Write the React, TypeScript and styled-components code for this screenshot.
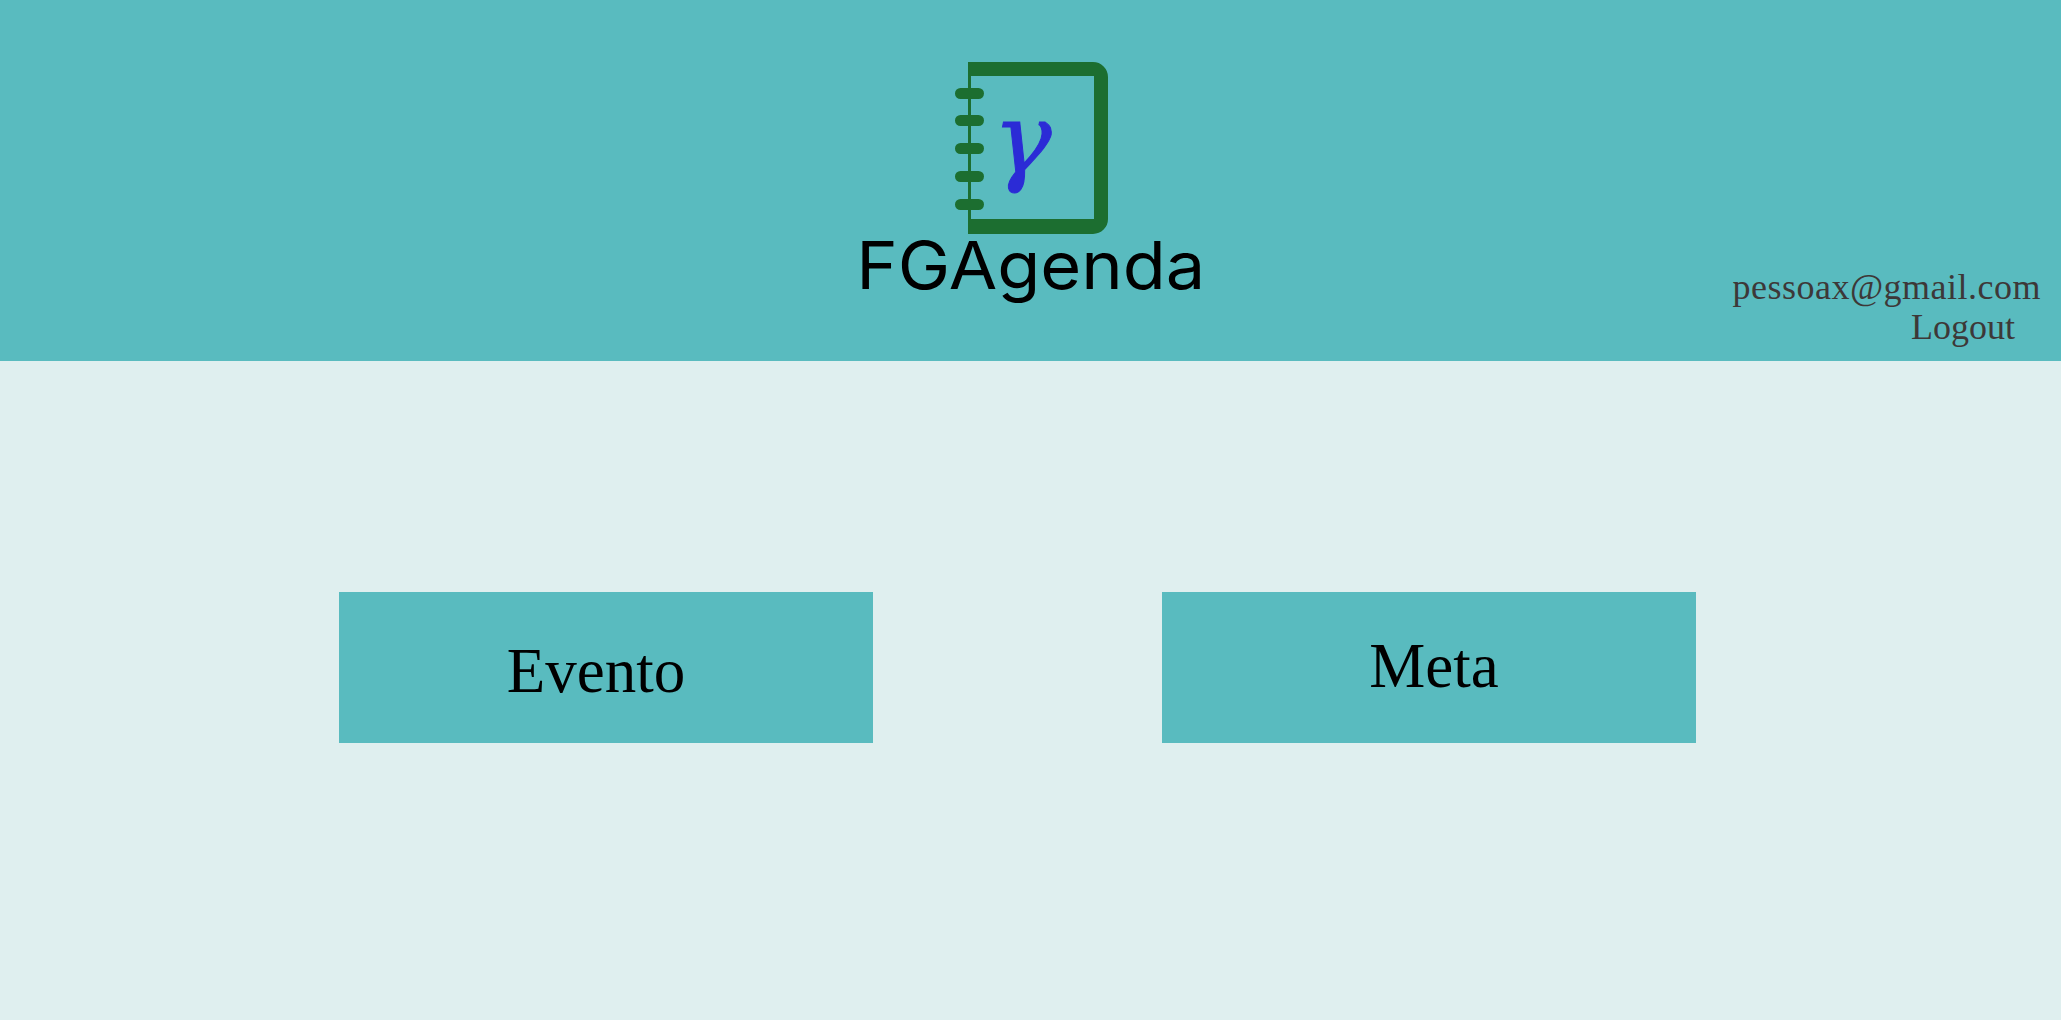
import React from "react";
import styled, { createGlobalStyle } from "styled-components";

const Global = createGlobalStyle`
  html, body { margin: 0; padding: 0; background: #dfefef; }
  * { box-sizing: border-box; }
`;

const Page = styled.div`
  width: 100%;
  height: 1020px;
  overflow: hidden;
  background: #dfefef;
`;

const Header = styled.header`
  height: 361px;
  background: #59bbbf;
  display: grid;
  grid-template-columns: 1fr auto 1fr;
`;

const Brand = styled.div`
  grid-column: 2;
  display: flex;
  flex-direction: column;
  align-items: center;
  padding-top: 62px;
`;

const LogoMark = styled.svg`
  display: block;
  width: 153px;
  height: 172px;
  margin-left: 2px;
`;

const BrandName = styled.div`
  font-family: "Inter", sans-serif;
  font-size: 66px;
  font-weight: 400;
  line-height: 70px;
  color: #000;
  margin-top: -4px;
  white-space: nowrap;
  transform: scaleX(1.065);
`;

const UserBox = styled.div`
  grid-column: 3;
  justify-self: end;
  align-self: end;
  display: flex;
  flex-direction: column;
  align-items: flex-end;
  padding: 0 20px 14px 0;
  font-family: "Liberation Serif", serif;
  font-size: 36px;
  line-height: 40px;
  color: #3d3838;
`;

const Email = styled.div`
  letter-spacing: 0.5px;
`;

const Logout = styled.a`
  margin-right: 26px;
  cursor: pointer;
`;

const Main = styled.main`
  display: flex;
  gap: 289px;
  padding: 231px 0 0 339px;
`;

const ActionButton = styled.button<{ $shift: number; $drop: number }>`
  width: 534px;
  height: 151px;
  border: 0;
  padding: ${(p) => (p.$drop > 0 ? p.$drop : 0)}px ${(p) => (p.$shift < 0 ? -p.$shift * 2 : 0)}px
    ${(p) => (p.$drop < 0 ? -p.$drop : 0)}px ${(p) => (p.$shift > 0 ? p.$shift * 2 : 0)}px;
  background: #59bbbf;
  color: #000;
  font-family: "Liberation Serif", serif;
  font-size: 63px;
  line-height: 70px;
  cursor: pointer;
`;

const Ring = ({ y }: { y: number }) => (
  <rect x="0" y={y} width="29" height="11" rx="5.5" fill="#1c6e30" />
);

export default function App() {
  return (
    <Page>
      <Global />
      <Header>
        <Brand>
          <LogoMark viewBox="0 0 153 172">
            <path
              fill="#1c6e30"
              fillRule="evenodd"
              d="M13 0H138A15 15 0 0 1 153 15V157A15 15 0 0 1 138 172H13ZM16 14V157H139V14Z"
            />
            {[26, 53, 81, 109, 137].map((y) => (
              <Ring key={y} y={y} />
            ))}
            <text
              x="38"
              y="111"
              fontFamily="'DejaVu Serif', serif"
              fontSize="98"
              fontStyle="italic"
              fontWeight="400"
              fill="#2b2bd6"
              stroke="#2b2bd6"
              strokeWidth="1"
            >
              γ
            </text>
          </LogoMark>
          <BrandName>FGAgenda</BrandName>
        </Brand>
        <UserBox>
          <Email>pessoax@gmail.com</Email>
          <Logout>Logout</Logout>
        </UserBox>
      </Header>
      <Main>
        <ActionButton $shift={-10} $drop={6}>Evento</ActionButton>
        <ActionButton $shift={5} $drop={-4}>Meta</ActionButton>
      </Main>
    </Page>
  );
}
